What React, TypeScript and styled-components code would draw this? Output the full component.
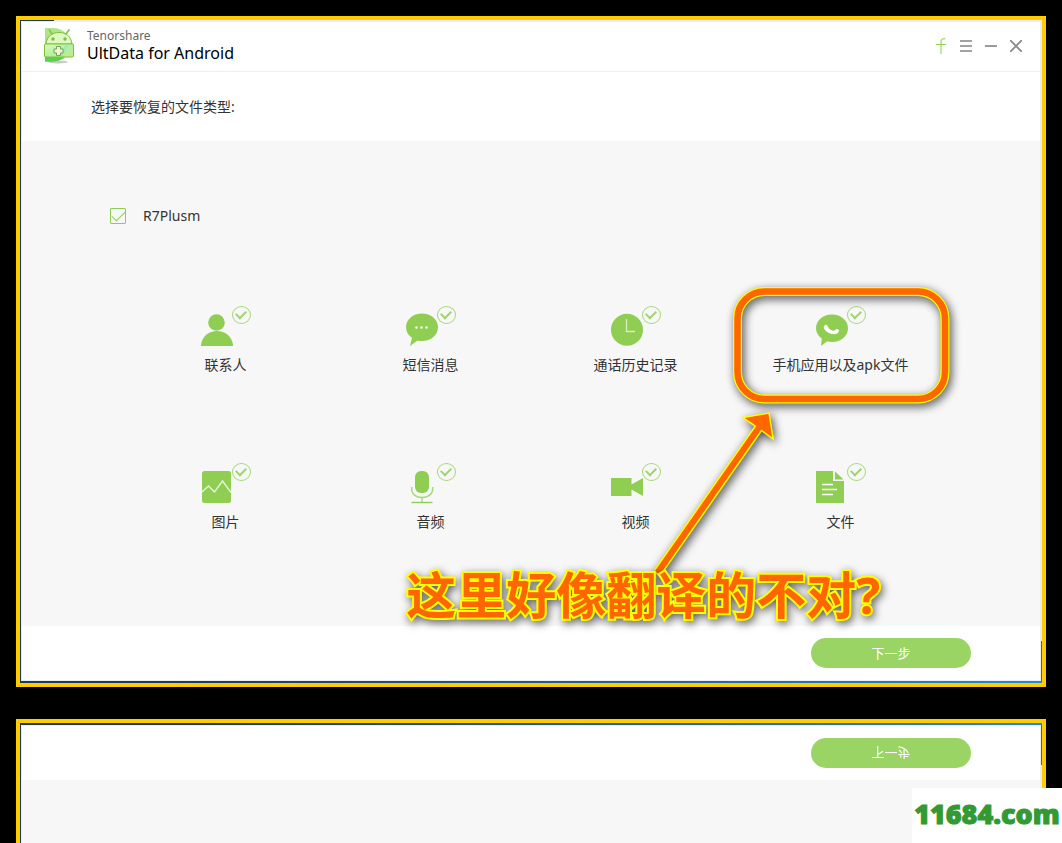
import React from "react";
import styled, { createGlobalStyle, css } from "styled-components";

const green = "#8fce52";
const ink = "#333333";

const GlobalStyle = createGlobalStyle`
  * { box-sizing: border-box; }
  body {
    margin: 0;
    background: #000;
    color: ${ink};
    font-family: "Noto Sans", "Noto Sans CJK SC", sans-serif;
    font-size: 14px;
    line-height: 22px;
  }
  button { font: inherit; border: 0; padding: 0; background: none; cursor: pointer; }
`;

const Page = styled.div`
  display: flex;
  flex-direction: column;
  gap: 32px;
  height: 100vh;
  min-height: 800px;
  overflow: hidden;
  padding: 16px 16px 0;
`;

const Frame = styled.section<{ $mirrored?: boolean }>`
  display: flex;
  flex-direction: column;
  flex: none;
  border: 4px solid #ffcc00;
  padding: 1px 1px 2px;
  background:
    linear-gradient(to right, #1c3a5c, #1c3a5c 15%, #1f8ad6) bottom / 100% 2px no-repeat,
    linear-gradient(#1c3a5c, #1c3a5c) left / 1px 100% no-repeat,
    linear-gradient(to right, #1c3a5c 34px, #ebebeb 34px) top / 100% 1px no-repeat,
    linear-gradient(to top, #1f6fb0 42px, #ebebeb 42px) right / 1px 100% no-repeat;

  ${(p) =>
    p.$mirrored &&
    css`
      flex: 1;
      border-bottom: 0;
      padding: 2px 1px 0;
      background:
        linear-gradient(to right, #1c3a5c, #1c3a5c 15%, #1f8ad6) top / 100% 2px no-repeat,
        linear-gradient(#1c3a5c, #1c3a5c) left / 1px 100% no-repeat,
        linear-gradient(to bottom, #1f6fb0 42px, #ebebeb 42px) right / 1px 100% no-repeat;
    `}
`;

const Window = styled.div<{ $open?: boolean }>`
  display: flex;
  flex-direction: column;
  flex: 1;
  background: #fff;
  border: 1px solid #ebedf0;
  border-bottom-width: ${(p) => (p.$open ? 0 : 1)}px;
`;

const TitleBar = styled.header`
  display: flex;
  align-items: center;
  gap: 12px;
  height: 50px;
  padding: 0 14px 2px 21px;
  border-bottom: 1px solid #eeeeee;
`;

const Brand = styled.div`
  flex: 1;
  display: flex;
  flex-direction: column;
`;

const Maker = styled.span`
  font-size: 12px;
  line-height: 14px;
  color: #666;
`;

const Product = styled.h1`
  margin: 0;
  font-size: 16px;
  font-weight: 400;
  line-height: 20px;
  color: #000;
`;

const WindowControls = styled.div`
  display: flex;
  gap: 5px;
`;

const ControlButton = styled.button`
  display: flex;
  align-items: center;
  justify-content: center;
  width: 20px;
  height: 20px;
`;

const Prompt = styled.p`
  margin: 0;
  height: 69px;
  padding: 0 69px;
  font-size: 14px;
  line-height: 69px;
`;

const Stage = styled.main`
  position: relative;
  padding: 64px 97px 93px 101px;
  background: #f7f7f7;
`;

const Filler = styled.div`
  flex: 1;
  background: #f7f7f7;
`;

const DeviceRow = styled.label`
  display: flex;
  align-items: center;
  gap: 17px;
  width: max-content;
  margin-left: -13px;
`;

const Tick = styled.input<{ $round?: boolean }>`
  appearance: none;
  flex: none;
  display: grid;
  place-items: center;
  margin: 0;
  width: ${(p) => (p.$round ? 19 : 16)}px;
  height: ${(p) => (p.$round ? 18 : 16)}px;
  border: 1px solid ${(p) => (p.$round ? "#a6d878" : green)};
  border-radius: ${(p) => (p.$round ? "50%" : "1px")};

  &:checked::after {
    content: "";
    width: ${(p) => (p.$round ? 8 : 12)}px;
    height: ${(p) => (p.$round ? 5 : 6)}px;
    margin-top: -3px;
    border-left: ${(p) => (p.$round ? 2 : 1)}px solid;
    border-bottom: ${(p) => (p.$round ? 2 : 1)}px solid;
    border-color: ${(p) => (p.$round ? "#a0d56e" : green)};
    transform: rotate(-45deg);
  }
`;

const TypeGrid = styled.div`
  display: grid;
  grid-template-columns: repeat(4, 1fr);
  row-gap: 87px;
  margin-top: 79px;
`;

const TypeItem = styled.label`
  display: flex;
  flex-direction: column;
  align-items: center;
  gap: 8px;
`;

const TypeIcon = styled.span`
  display: flex;
  align-items: flex-start;
  height: 40px;

  svg { overflow: visible; }
`;

const Footer = styled.footer`
  display: flex;
  justify-content: flex-end;
  padding: 12px 69px;
`;

const StepButton = styled.button`
  width: 160px;
  height: 30px;
  border-radius: 15px;
  background: #9ad465;
  color: #fff;
  font-size: 13px;
  line-height: 30px;
`;

const Flipped = styled.span`
  display: block;
  transform: scaleY(-1);
`;

const Marker = styled.svg`
  position: absolute;
  right: 86px;
  top: 140px;
  pointer-events: none;
  overflow: visible;
  filter: drop-shadow(2px 3px 5px rgba(0, 0, 0, 0.7));
`;

const Remark = styled.p`
  position: absolute;
  right: 160px;
  bottom: -2px;
  margin: 0;
  color: #ff6600;
  font-family: "Noto Sans CJK SC", sans-serif;
  font-size: 50px;
  font-weight: 700;
  line-height: 66px;
  white-space: nowrap;
  -webkit-text-stroke: 4px #ffff00;
  paint-order: stroke fill;
  filter: drop-shadow(2px 3px 4px rgba(0, 0, 0, 0.6));
  pointer-events: none;
`;

const RemarkEnd = styled.span`
  font-family: "Noto Sans", sans-serif;
`;

const Watermark = styled.a`
  position: fixed;
  right: 0;
  bottom: 0;
  width: 150px;
  height: 55px;
  background: #fff;
  color: #339933;
  font-family: "Open Sans", sans-serif;
  font-size: 27px;
  font-weight: 800;
  line-height: 52px;
  text-align: center;
  text-decoration: none;
  -webkit-text-stroke: 1px #339933;
`;

function Logo() {
  return (
    <svg width="32" height="38" viewBox="0 0 32 38" aria-hidden="true">
      <defs>
        <linearGradient id="logoBox" x1="0" y1="0" x2="1" y2="1">
          <stop offset="0" stopColor="#dcf9b4" />
          <stop offset="0.55" stopColor="#b4efa4" />
          <stop offset="1" stopColor="#c3ec80" />
        </linearGradient>
        <linearGradient id="logoBack" x1="0" y1="0" x2="0" y2="1">
          <stop offset="0" stopColor="#b4e48a" />
          <stop offset="0.6" stopColor="#a5e06e" />
          <stop offset="1" stopColor="#4fc238" />
        </linearGradient>
      </defs>
      <ellipse cx="15" cy="35" rx="10" ry="1.500" fill="#c9c9c9" />
      <path d="M2 1h8c10 0 17 7 18 18-1 9-8 15-18 15.500H2z" fill="url(#logoBack)" />
      <path d="M2 34.500c9 0 17-2 22-6.500H14L2 32z" fill="#5fd04a" />
      <path d="M3 17C4 9 9 5.500 16 5.500S28 9 29 17z" fill="#dff8c0" stroke="#7cbd45" />
      <path d="M9 7L6.500 3M23 7l3-4" stroke="#8cc75a" strokeWidth="2" strokeLinecap="round" />
      <circle cx="10" cy="12" r="1.700" fill="#7cbd45" />
      <circle cx="22" cy="12" r="1.700" fill="#7cbd45" />
      <rect x="1.500" y="17" width="29" height="13" rx="1" fill="url(#logoBox)" stroke="#7fbf3f" />
      <path d="M19 29.500l7-12h-4l-5 12z" fill="#8be8b8" opacity="0.6" />
      <path
        d="M13.500 19.500h4v2.500h2.500v4h-2.500v2.500h-4v-2.500H11v-4h2.500z"
        fill="#e3f8cf"
        stroke="#7a9f5e"
      />
    </svg>
  );
}

const drawings: Record<string, React.ReactNode> = {
  contact: (
    <g fill={green}>
      <circle cx="15.500" cy="16.500" r="8.300" />
      <path d="M0 40v-1.500C1.500 30 8 25 16 25S30.500 30 32 38.500V40z" />
    </g>
  ),
  message: (
    <g>
      <path
        d="M16 7.500c9 0 16 6 16 13.700S25 35 16 35c-1.500 0-3 0-4.500-.5L4 40l2-8.200C2.200 29.200 0 25.500 0 21.200 0 13.500 7 7.500 16 7.500z"
        fill={green}
      />
      <g fill="#fff">
        <circle cx="10.500" cy="21.500" r="1.200" />
        <circle cx="15.500" cy="21.500" r="1.200" />
        <circle cx="20.500" cy="21.500" r="1.200" />
      </g>
    </g>
  ),
  call: (
    <g>
      <circle cx="16" cy="23.700" r="16" fill={green} />
      <path d="M15.500 13v12.500H24" fill="none" stroke="#d6efbd" strokeWidth="1.300" />
    </g>
  ),
  app: (
    <g>
      <path
        d="M16 8.500c9 0 16 6 16 13.700S25 36 16 36c-1.700 0-3.300-.2-4.800-.7L5 40l.8-7.500C2.200 30 0 26.400 0 22.200 0 14.500 7 8.500 16 8.500z"
        fill={green}
      />
      <path
        d="M9 19c-2 1-1.500 4 1.500 6.500 4.500 3.500 11 4 12.500-.5.3-1-.8-2-2-2s-1.800 1.700-3.300 1.700c-2.200-.2-4.200-1.200-5.200-2.700-.5-1-1-4-3.500-3z"
        fill="#fff"
      />
    </g>
  ),
  picture: (
    <g>
      <rect x="1" y="8" width="29" height="32" rx="2.500" fill={green} />
      <path
        d="M1 29l6.500-6 6 6L21.500 18 30 29.500"
        fill="none"
        stroke="#e4f5d4"
        strokeWidth="1.400"
      />
    </g>
  ),
  audio: (
    <g fill="none" stroke="#a6d878" strokeWidth="1.400">
      <rect x="9" y="8" width="14" height="22" rx="6" fill={green} stroke="none" />
      <path d="M5.700 24v2c0 5 4 8.500 10.300 8.500S26.700 31 26.700 26v-2M16 34.500v5" />
      <path d="M5.500 39.500h21" stroke={green} />
    </g>
  ),
  video: (
    <path d="M0 15h20.500v6.500L32 15v18l-11.500-6.500V33H0z" fill={green} />
  ),
  file: (
    <g>
      <path d="M0 8h17v10h11v22H0z" fill={green} />
      <path d="M19 8.500l8.500 8H19z" fill={green} />
      <path d="M6 21.500h11M6 26.500h15M6 31.500h11" stroke="#fff" strokeWidth="1.300" />
    </g>
  ),
};

const fileTypes = [
  { id: "contact", label: "联系人" },
  { id: "message", label: "短信消息" },
  { id: "call", label: "通话历史记录" },
  { id: "app", label: "手机应用以及apk文件" },
  { id: "picture", label: "图片" },
  { id: "audio", label: "音频" },
  { id: "video", label: "视频" },
  { id: "file", label: "文件" },
];

function Controls() {
  return (
    <WindowControls>
      <ControlButton aria-label="Facebook">
        <svg width="12" height="18" viewBox="0 0 12 18" fill="none">
          <path d="M6 17V5c0-2.500 1-3.500 4.500-3.500" stroke="#b5e08c" strokeWidth="1.600" />
          <path d="M1 7.500h10" stroke={green} />
        </svg>
      </ControlButton>
      <ControlButton aria-label="Menu">
        <svg width="12" height="12" viewBox="0 0 12 12" stroke="#858585" strokeWidth="1.600">
          <path d="M0 1h12M0 6h12M0 11h12" />
        </svg>
      </ControlButton>
      <ControlButton aria-label="Minimize">
        <svg width="12" height="12" viewBox="0 0 12 12" stroke="#8f8f8f" strokeWidth="1.800">
          <path d="M0 6h12" />
        </svg>
      </ControlButton>
      <ControlButton aria-label="Close">
        <svg width="12" height="12" viewBox="0 0 12 12" stroke="#8a8a8a" strokeWidth="1.900">
          <path d="M0 0l12 12M12 0L0 12" />
        </svg>
      </ControlButton>
    </WindowControls>
  );
}

export default function App() {
  return (
    <>
      <GlobalStyle />
      <Page>
        <Frame>
          <Window>
            <TitleBar>
              <Logo />
              <Brand>
                <Maker>Tenorshare</Maker>
                <Product>UltData for Android</Product>
              </Brand>
              <Controls />
            </TitleBar>
            <Prompt>选择要恢复的文件类型:</Prompt>
            <Stage>
              <DeviceRow>
                <Tick type="checkbox" defaultChecked />
                R7Plusm
              </DeviceRow>
              <TypeGrid>
                {fileTypes.map((t) => (
                  <TypeItem key={t.id}>
                    <TypeIcon>
                      <svg width="31" height="40" viewBox="0 0 31 40" aria-hidden="true">
                        {drawings[t.id]}
                      </svg>
                      <Tick type="checkbox" $round defaultChecked />
                    </TypeIcon>
                    {t.label}
                  </TypeItem>
                ))}
              </TypeGrid>
              <Marker width="300" height="300" viewBox="654 281 300 300" aria-hidden="true">
                <rect
                  x="737.500"
                  y="291.500"
                  width="207.500"
                  height="107.500"
                  rx="27"
                  fill="none"
                  stroke="#ffff00"
                  strokeWidth="9"
                />
                <rect
                  x="737.500"
                  y="291.500"
                  width="207.500"
                  height="107.500"
                  rx="27"
                  fill="none"
                  stroke="#ff6600"
                  strokeWidth="6.500"
                />
                <path
                  d="M654 571L755.300 426.300 743 417.500 769 413 773.200 439 761.500 430.500 660 576z"
                  fill="#ff6600"
                  stroke="#ffff00"
                  strokeWidth="1.500"
                />
              </Marker>
              <Remark>
                这里好像翻译的不对<RemarkEnd>?</RemarkEnd>
              </Remark>
            </Stage>
            <Footer>
              <StepButton>下一步</StepButton>
            </Footer>
          </Window>
        </Frame>
        <Frame $mirrored>
          <Window $open>
            <Footer>
              <StepButton>
                <Flipped>下一步</Flipped>
              </StepButton>
            </Footer>
            <Filler />
          </Window>
        </Frame>
      </Page>
      <Watermark href="#">11684.com</Watermark>
    </>
  );
}
